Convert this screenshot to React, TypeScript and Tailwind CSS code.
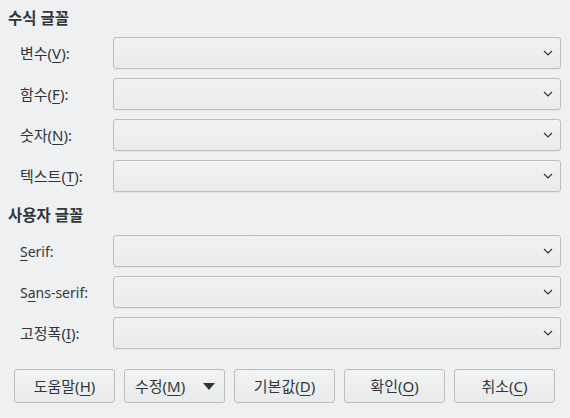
import React from "react";

const font = { fontFamily: '"Noto Sans", "Noto Sans CJK KR", sans-serif' };

function Mn({ children }: { children: React.ReactNode }) {
  return <span className="underline underline-offset-[3px] decoration-1">{children}</span>;
}

function Chevron() {
  return (
    <svg width="10" height="6" viewBox="0 0 10 6" className="shrink-0">
      <path d="M1 1 L5 5 L9 1" fill="none" stroke="#31363b" strokeWidth="1.2" />
    </svg>
  );
}

function Combo() {
  return (
    <div className="flex-1 h-[32px] rounded-[3px] border border-[#bcbebf] bg-gradient-to-b from-[#f1f2f2] to-[#eaebec] flex items-center justify-end pr-[7px] shadow-[0_1px_0_rgba(0,0,0,0.04)]">
      <Chevron />
    </div>
  );
}

function Row({ label, latin }: { label: React.ReactNode; latin?: boolean }) {
  return (
    <div className="flex items-center pl-[20px] pr-[9px]">
      <div className={"w-[93px] text-[#31363b] whitespace-nowrap " + (latin ? "text-[14px]" : "text-[15px]")}>
        {label}
      </div>
      <Combo />
    </div>
  );
}

function Btn({ children, menu }: { children: React.ReactNode; menu?: boolean }) {
  return (
    <div
      className={
        "w-[101px] h-[34px] rounded-[3px] border border-[#bcbebf] bg-gradient-to-b from-[#f1f2f2] to-[#e9eaeb] flex items-center text-[15px] text-[#31363b] " +
        (menu ? "justify-between pl-[10px] pr-[9px]" : "justify-center")
      }
    >
      <span>{children}</span>
      {menu && (
        <svg width="12" height="7" viewBox="0 0 12 7">
          <path d="M0 0 H12 L6 7 Z" fill="#31363b" />
        </svg>
      )}
    </div>
  );
}

export default function App() {
  return (
    <div style={font} className="w-[570px] h-[418px] bg-[#eff0f1] flex flex-col">
      <div className="pl-[8px] pt-[8px] h-[37px] text-[15.5px] font-bold text-[#31363b] leading-[20px]">수식 글꼴</div>
      <div className="flex flex-col gap-[9px]">
        <Row label={<>변수(<Mn>V</Mn>):</>} />
        <Row label={<>함수(<Mn>F</Mn>):</>} />
        <Row label={<>숫자(<Mn>N</Mn>):</>} />
        <Row label={<>텍스트(<Mn>T</Mn>):</>} />
      </div>
      <div className="pl-[8px] pt-[13px] h-[43px] text-[15.5px] font-bold text-[#31363b] leading-[20px]">사용자 글꼴</div>
      <div className="flex flex-col gap-[9px]">
        <Row latin label={<><Mn>S</Mn>erif:</>} />
        <Row latin label={<>S<Mn>a</Mn>ns-serif:</>} />
        <Row label={<>고정폭(<Mn>I</Mn>):</>} />
      </div>
      <div className="flex gap-[9px] pl-[14px] mt-[20px]">
        <Btn>도움말(<Mn>H</Mn>)</Btn>
        <Btn menu>수정(<Mn>M</Mn>)</Btn>
        <Btn>기본값(<Mn>D</Mn>)</Btn>
        <Btn>확인(<Mn>O</Mn>)</Btn>
        <Btn>취소(<Mn>C</Mn>)</Btn>
      </div>
    </div>
  );
}
